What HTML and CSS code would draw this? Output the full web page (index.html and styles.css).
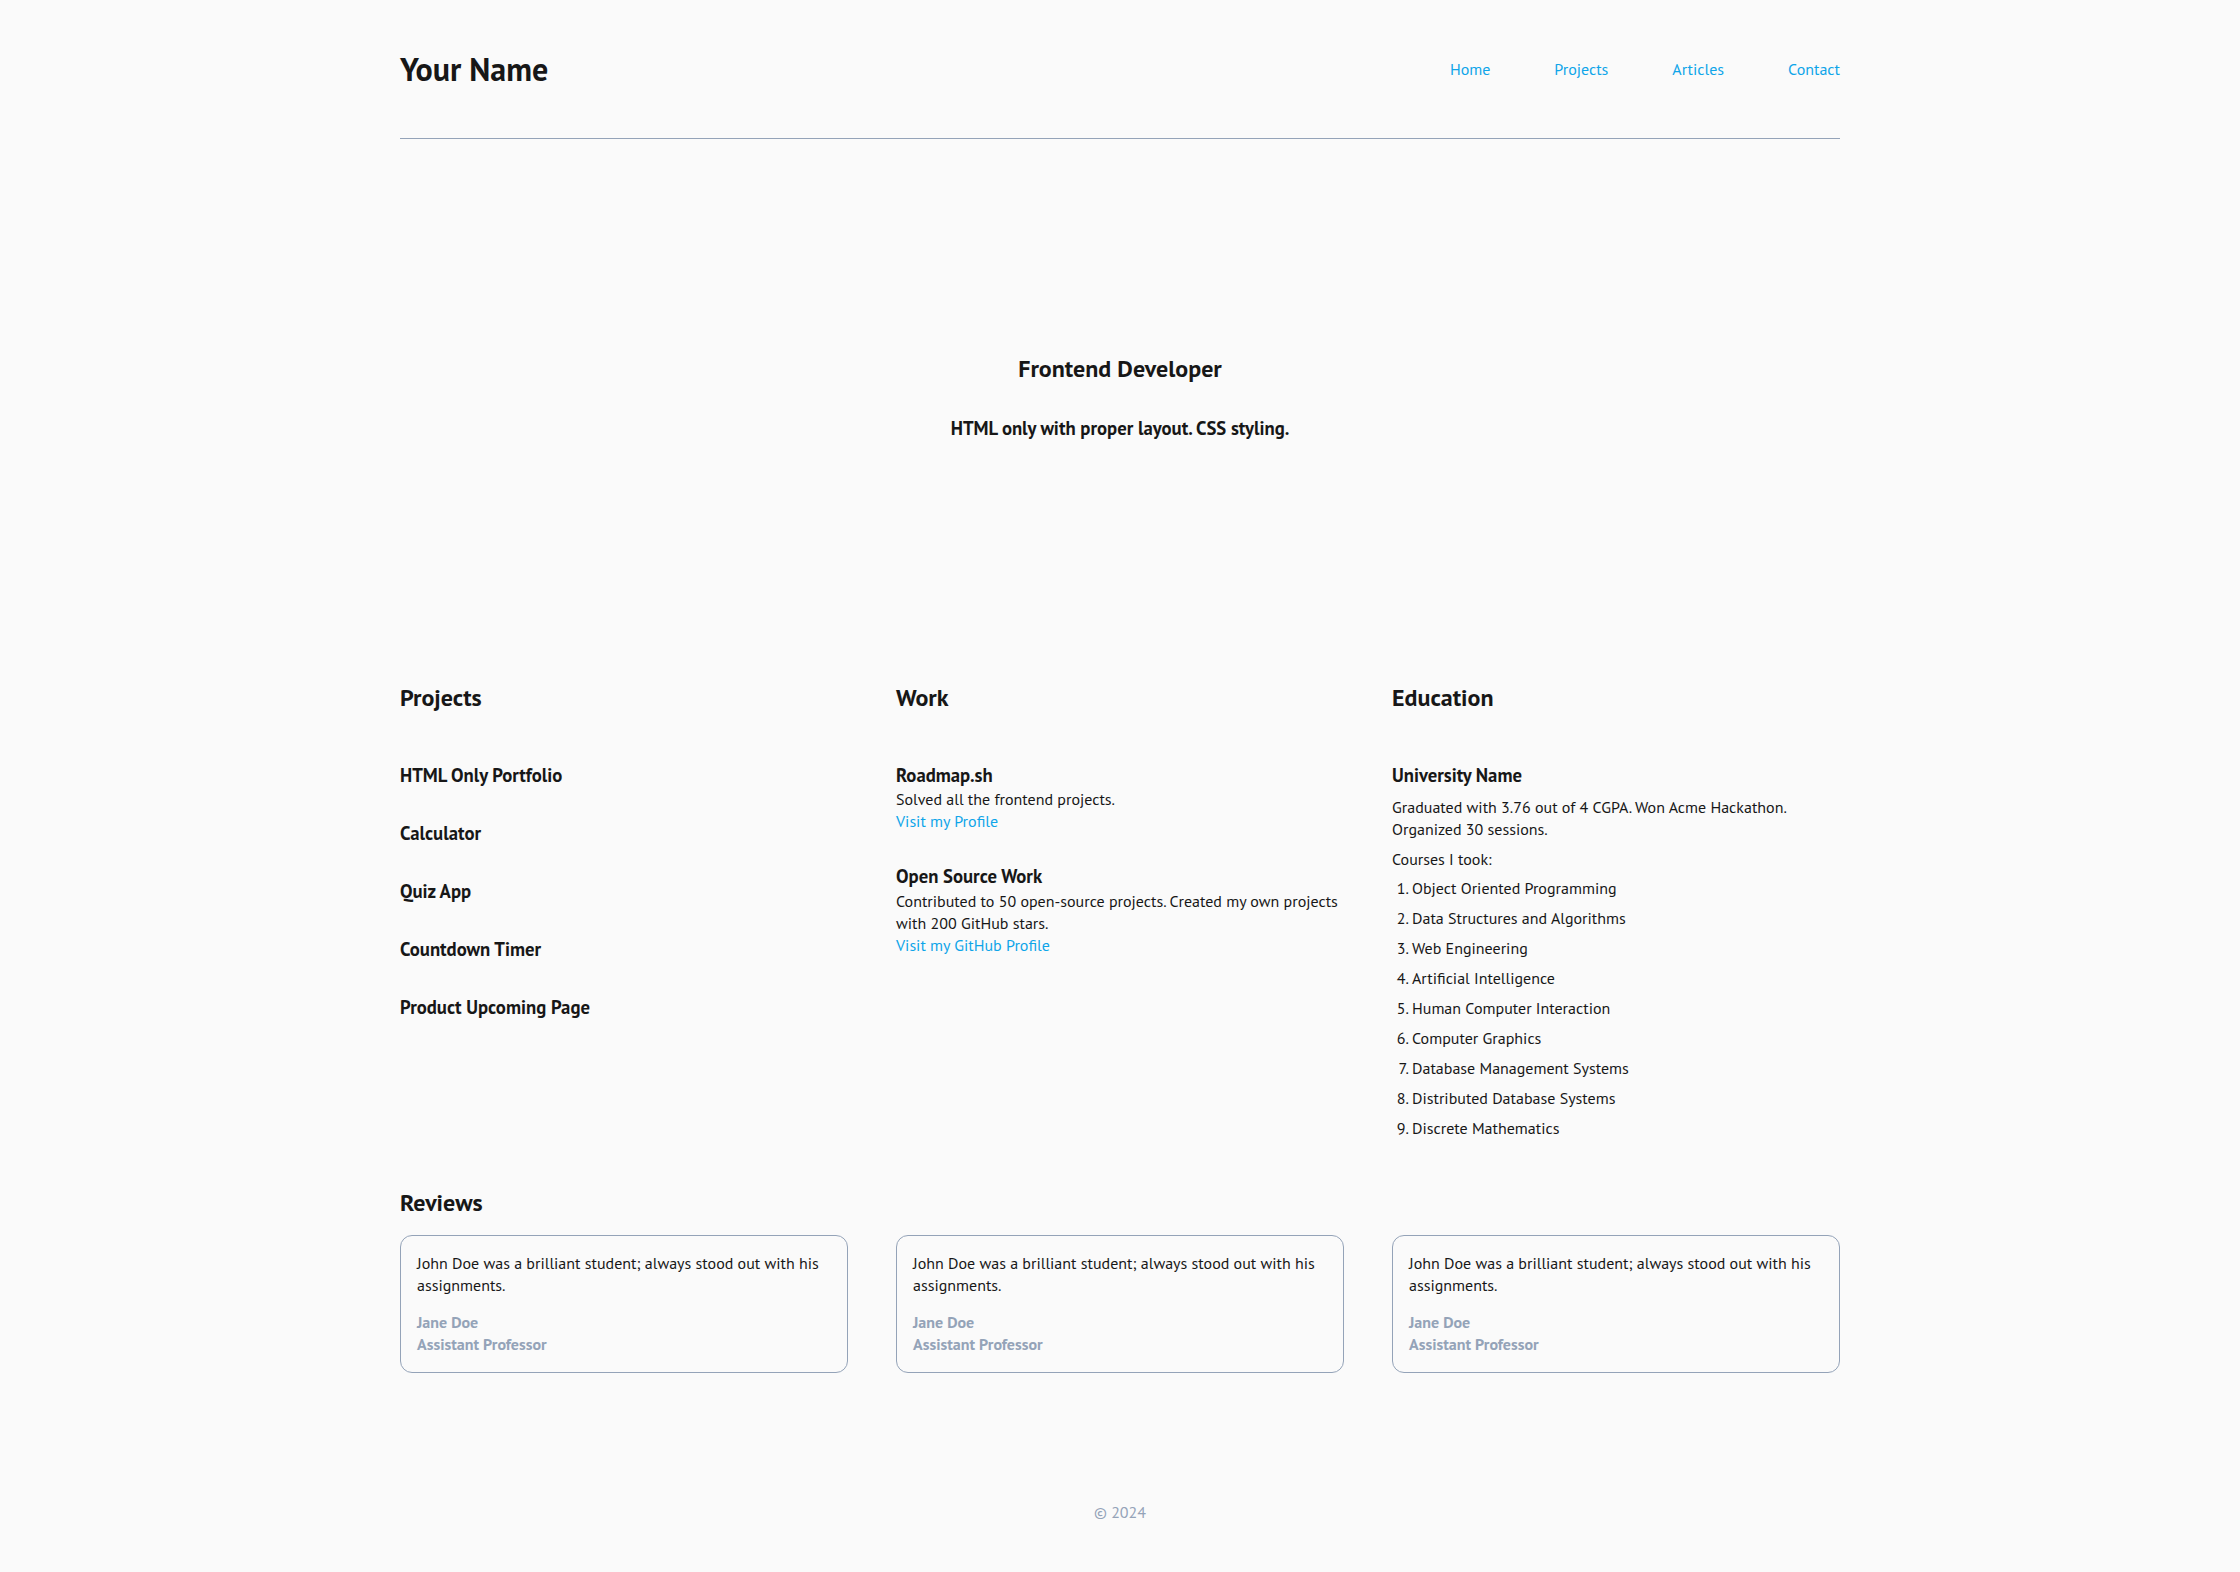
FILE: index.html
```html
<!DOCTYPE html>
<html lang="en">
<head>
<meta charset="utf-8">
<title>Your Name</title>
<link rel="stylesheet" href="styles.css">
</head>
<body>
<div class="page">
  <header class="site-header">
    <h1 class="brand">Your Name</h1>
    <nav class="nav">
      <a href="#">Home</a>
      <a href="#">Projects</a>
      <a href="#">Articles</a>
      <a href="#">Contact</a>
    </nav>
  </header>

  <section class="hero">
    <h2 class="hero-title">Frontend Developer</h2>
    <h3 class="hero-sub">HTML only with proper layout. CSS styling.</h3>
  </section>

  <div class="columns">
    <section class="col">
      <h2 class="section-title">Projects</h2>
      <div class="project-list">
        <h3 class="item-title">HTML Only Portfolio</h3>
        <h3 class="item-title">Calculator</h3>
        <h3 class="item-title">Quiz App</h3>
        <h3 class="item-title">Countdown Timer</h3>
        <h3 class="item-title">Product Upcoming Page</h3>
      </div>
    </section>

    <section class="col">
      <h2 class="section-title">Work</h2>
      <div class="work-list">
        <article class="work-item">
          <h3 class="item-title">Roadmap.sh</h3>
          <p class="text">Solved all the frontend projects.</p>
          <a class="link" href="#">Visit my Profile</a>
        </article>
        <article class="work-item">
          <h3 class="item-title">Open Source Work</h3>
          <p class="text">Contributed to 50 open-source projects. Created my own projects with 200 GitHub stars.</p>
          <a class="link" href="#">Visit my GitHub Profile</a>
        </article>
      </div>
    </section>

    <section class="col">
      <h2 class="section-title">Education</h2>
      <div class="edu">
        <h3 class="item-title">University Name</h3>
        <p class="text">Graduated with 3.76 out of 4 CGPA. Won Acme Hackathon. Organized 30 sessions.</p>
        <p class="text">Courses I took:</p>
        <ol class="courses">
          <li>Object Oriented Programming</li>
          <li>Data Structures and Algorithms</li>
          <li>Web Engineering</li>
          <li>Artificial Intelligence</li>
          <li>Human Computer Interaction</li>
          <li>Computer Graphics</li>
          <li>Database Management Systems</li>
          <li>Distributed Database Systems</li>
          <li>Discrete Mathematics</li>
        </ol>
      </div>
    </section>
  </div>

  <section class="reviews">
    <h2 class="reviews-title">Reviews</h2>
    <div class="review-grid">
      <blockquote class="review">
        <p class="text">John Doe was a brilliant student; always stood out with his assignments.</p>
        <footer class="reviewer">
          <span>Jane Doe</span>
          <span>Assistant Professor</span>
        </footer>
      </blockquote>
      <blockquote class="review">
        <p class="text">John Doe was a brilliant student; always stood out with his assignments.</p>
        <footer class="reviewer">
          <span>Jane Doe</span>
          <span>Assistant Professor</span>
        </footer>
      </blockquote>
      <blockquote class="review">
        <p class="text">John Doe was a brilliant student; always stood out with his assignments.</p>
        <footer class="reviewer">
          <span>Jane Doe</span>
          <span>Assistant Professor</span>
        </footer>
      </blockquote>
    </div>
  </section>

  <footer class="site-footer">© 2024</footer>
</div>
</body>
</html>
```
FILE: styles.css
```css
* { box-sizing: border-box; }

html, body {
  margin: 0;
  padding: 0;
  background: #fafafa;
}

body {
  font-family: "PT Sans", Lato, "Noto Sans", sans-serif;
  font-size: 16px;
  line-height: 1.375;
  color: #171717;
}

h1, h2, h3, p, ol, blockquote { margin: 0; }

.page {
  width: 1440px;
  margin: 0 auto;
}

/* Header */
.site-header {
  display: flex;
  justify-content: space-between;
  align-items: center;
  padding: 47px 0;
  border-bottom: 1px solid #94a3b8;
}

.brand {
  font-size: 32px;
  font-weight: 700;
}

.nav {
  display: flex;
  gap: 64px;
}

.nav a, .link {
  color: #0ea5e9;
  text-decoration: none;
}

/* Hero */
.hero {
  display: flex;
  flex-direction: column;
  align-items: center;
  gap: 31px;
  padding: 213px 0 239px;
  text-align: center;
}

.hero-title {
  font-size: 24px;
  font-weight: 700;
}

.hero-sub {
  font-size: 18.72px;
  font-weight: 700;
}

/* Columns */
.columns {
  display: grid;
  grid-template-columns: repeat(3, 1fr);
  gap: 48px;
}

.section-title {
  font-size: 24px;
  font-weight: 700;
  margin-bottom: 49px;
}

.item-title {
  font-size: 18.72px;
  font-weight: 700;
}

.project-list {
  display: flex;
  flex-direction: column;
  gap: 32.4px;
}

.work-list {
  display: flex;
  flex-direction: column;
  gap: 31.6px;
}

.work-item {
  display: flex;
  flex-direction: column;
  align-items: flex-start;
}

.edu {
  display: flex;
  flex-direction: column;
  gap: 8px;
}

.courses {
  margin-top: -1px;
  padding-left: 20px;
  display: flex;
  flex-direction: column;
  gap: 8px;
}

/* Reviews */
.reviews {
  margin-top: 47px;
}

.reviews-title {
  font-size: 24px;
  font-weight: 700;
  margin-bottom: 16px;
}

.review-grid {
  display: grid;
  grid-template-columns: repeat(3, 1fr);
  gap: 48px;
}

.review {
  border: 1px solid #94a3b8;
  border-radius: 12px;
  padding: 16px 16px 17px;
}

.reviewer {
  display: flex;
  flex-direction: column;
  margin-top: 15px;
  color: #94a3b8;
  font-weight: 700;
}

/* Footer */
.site-footer {
  padding: 128px 0 48px;
  text-align: center;
  color: #94a3b8;
}
```
